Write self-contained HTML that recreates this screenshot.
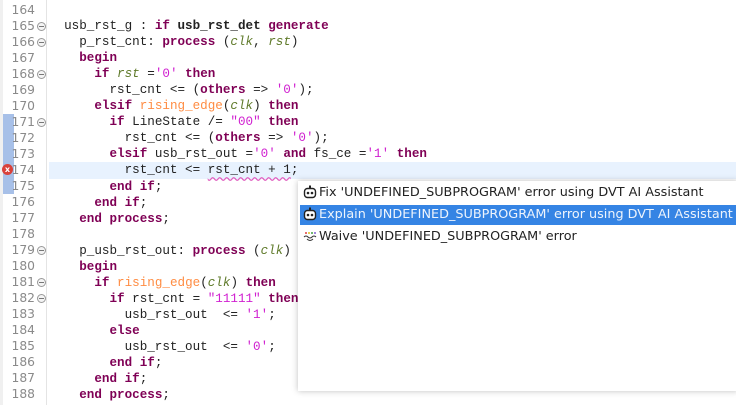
<!DOCTYPE html>
<html><head><meta charset="utf-8"><style>
body{margin:0;width:736px;height:405px;overflow:hidden;background:#fff;position:relative;font-family:"DejaVu Sans Mono",monospace}
.gut{position:absolute;left:0;top:0;width:46px;height:405px;background:#fff;border-right:1px solid #e4e4e4}
.lstrip{position:absolute;left:0;top:0;width:3px;height:405px;background:#f0f0f0}
.ln{position:absolute;left:0;width:35px;text-align:right;font-family:"DejaVu Sans",sans-serif;font-size:12.3px;color:#8a8a8a;height:16px;line-height:16px}
.fold{position:absolute;left:37px;width:7px;height:7px;border:1px solid #999;border-radius:50%;background:#f4f4f4}
.fold:after{content:"";position:absolute;left:1px;top:3px;width:5px;height:1px;background:#777}
.code{position:absolute;left:49px;top:2px;margin:0;font-size:12.6px;line-height:16.04px;color:#222;white-space:pre}
.k{color:#7f0055;font-weight:bold}
.i{color:#5f7a2a;font-style:italic}
.s{color:#d020d0}
.f{color:#ff8c42}
.hl{position:absolute;left:49px;top:162px;width:700px;height:17px;background:#e8f2fe}
.mark{position:absolute;left:3px;top:114px;width:11px;height:80px;background:#a7c0e8}
.err{position:absolute;left:2px;top:164px;width:11px;height:11px;border-radius:50%;background:#d9423b;color:#fff;font:bold 8px "DejaVu Sans",sans-serif;text-align:center;line-height:11px}
.pop{position:absolute;left:298px;top:181px;width:440px;height:210px;background:#fff;box-shadow:0 0 6px rgba(0,0,0,.25)}
.row{position:absolute;left:2px;width:436px;height:20px;line-height:20px;font-family:"DejaVu Sans",sans-serif;font-size:12.8px;color:#222;white-space:nowrap;letter-spacing:0}
.row .ic{display:inline-block;width:14px;height:14px;vertical-align:-3px;margin:0 2px 0 3px}
.sel{background:#3584e4;color:#eef4fc}
.sq{text-decoration:underline wavy #e060c0;text-underline-offset:3px}
</style></head><body>
<div class="gut"></div><div class="lstrip"></div>
<div class="hl"></div>
<div class="mark"></div>
<div class="err">x</div>
<div class="ln" style="top:2px">164</div>
<div class="ln" style="top:18px">165</div>
<div class="ln" style="top:34px">166</div>
<div class="ln" style="top:50px">167</div>
<div class="ln" style="top:66px">168</div>
<div class="ln" style="top:82px">169</div>
<div class="ln" style="top:98px">170</div>
<div class="ln" style="top:114px">171</div>
<div class="ln" style="top:130px">172</div>
<div class="ln" style="top:146px">173</div>
<div class="ln" style="top:162px">174</div>
<div class="ln" style="top:178px">175</div>
<div class="ln" style="top:194px">176</div>
<div class="ln" style="top:210px">177</div>
<div class="ln" style="top:226px">178</div>
<div class="ln" style="top:242px">179</div>
<div class="ln" style="top:258px">180</div>
<div class="ln" style="top:274px">181</div>
<div class="ln" style="top:290px">182</div>
<div class="ln" style="top:306px">183</div>
<div class="ln" style="top:322px">184</div>
<div class="ln" style="top:338px">185</div>
<div class="ln" style="top:354px">186</div>
<div class="ln" style="top:370px">187</div>
<div class="ln" style="top:386px">188</div>
<div class="fold" style="top:22px"></div>
<div class="fold" style="top:38px"></div>
<div class="fold" style="top:70px"></div>
<div class="fold" style="top:118px"></div>
<div class="fold" style="top:246px"></div>
<div class="fold" style="top:278px"></div>
<div class="fold" style="top:294px"></div>
<pre class="code">

  usb_rst_g : <span class="k">if</span> <b>usb_rst_det</b> <span class="k">generate</span>
    p_rst_cnt: <span class="k">process</span> (<span class="i">clk</span>, <span class="i">rst</span>)
    <span class="k">begin</span>
      <span class="k">if</span> <span class="i">rst</span> =<span class="s">'0'</span> <span class="k">then</span>
        rst_cnt &lt;= (<span class="k">others</span> =&gt; <span class="s">'0'</span>);
      <span class="k">elsif</span> <span class="f">rising_edge</span>(<span class="i">clk</span>) <span class="k">then</span>
        <span class="k">if</span> LineState /= <span class="s">"00"</span> <span class="k">then</span>
          rst_cnt &lt;= (<span class="k">others</span> =&gt; <span class="s">'0'</span>);
        <span class="k">elsif</span> usb_rst_out =<span class="s">'0'</span> <span class="k">and</span> fs_ce =<span class="s">'1'</span> <span class="k">then</span>
          rst_cnt &lt;= <span class="sq">rst_cnt + 1</span>;
        <span class="k">end</span> <span class="k">if</span>;
      <span class="k">end</span> <span class="k">if</span>;
    <span class="k">end</span> <span class="k">process</span>;

    p_usb_rst_out: <span class="k">process</span> (<span class="i">clk</span>)
    <span class="k">begin</span>
      <span class="k">if</span> <span class="f">rising_edge</span>(<span class="i">clk</span>) <span class="k">then</span>
        <span class="k">if</span> rst_cnt = <span class="s">"11111"</span> <span class="k">then</span>
          usb_rst_out  &lt;= <span class="s">'1'</span>;
        <span class="k">else</span>
          usb_rst_out  &lt;= <span class="s">'0'</span>;
        <span class="k">end</span> <span class="k">if</span>;
      <span class="k">end</span> <span class="k">if</span>;
    <span class="k">end</span> <span class="k">process</span>;</pre>
<div class="pop">
 <div class="row" style="top:2px"><svg class="ic" viewBox="0 0 14 14"><rect x="1.5" y="3.5" width="11" height="9" rx="3" fill="#fff" stroke="#222" stroke-width="1.4"/><rect x="6" y="0.5" width="2" height="3" fill="#222"/><circle cx="5" cy="8" r="1.3" fill="#222"/><circle cx="9" cy="8" r="1.3" fill="#222"/></svg>Fix 'UNDEFINED_SUBPROGRAM' error using DVT AI Assistant</div>
 <div class="row sel" style="top:24px"><svg class="ic" viewBox="0 0 14 14"><rect x="1.5" y="3.5" width="11" height="9" rx="3" fill="#fff" stroke="#222" stroke-width="1.4"/><rect x="6" y="0.5" width="2" height="3" fill="#222"/><circle cx="5" cy="8" r="1.3" fill="#222"/><circle cx="9" cy="8" r="1.3" fill="#222"/></svg>Explain 'UNDEFINED_SUBPROGRAM' error using DVT AI Assistant</div>
 <div class="row" style="top:46px"><svg class="ic" viewBox="0 0 14 14"><circle cx="3" cy="4" r="1" fill="#e04040"/><circle cx="6" cy="4" r="1" fill="#e0c020"/><circle cx="9" cy="4" r="1" fill="#40a040"/><circle cx="12" cy="4" r="1" fill="#8060d0"/><path d="M1 8 Q3 6 5 8 T9 8 T13 8" fill="none" stroke="#333" stroke-width="1"/><path d="M4 10 Q7 13 10 10" fill="none" stroke="#333" stroke-width="1"/></svg>Waive 'UNDEFINED_SUBPROGRAM' error</div>
</div>
</body></html>
